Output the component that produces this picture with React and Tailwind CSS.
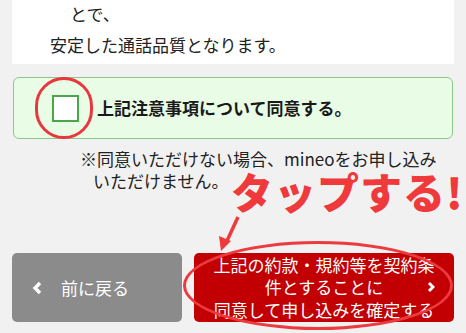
export default function App() {
  return (
    <div
      className="relative w-[466px] h-[333px] overflow-hidden bg-[#f1f1f1] px-[12px] text-[#222]"
      style={{ fontFamily: '"Noto Sans CJK JP", "Noto Sans", sans-serif' }}
    >
      {/* notice card (tail end) */}
      <div className="h-[64px] bg-white pl-[38px] pt-[3px] text-[17px] leading-[22px]">
        <p className="pl-[20px]">とで、</p>
        <p className="mt-[9px]">安定した通話品質となります。</p>
      </div>

      {/* agree box */}
      <div className="relative mx-[1px] mt-[13px] flex h-[62px] items-center gap-[18px] rounded-[6px] border border-[#8cc88c] bg-[#e9fce6] pl-[38px]">
        <div className="h-[27px] w-[27px] border-2 border-[#4aa64a] bg-white" />
        <span className="text-[17px] font-bold text-[#1a1a1a]">上記注意事項について同意する。</span>
        {/* red annotation circle */}
        <div className="absolute left-[21px] top-[-1px] h-[62px] w-[58px] rounded-full border-[3px] border-[#e8383d]" />
      </div>

      {/* note */}
      <div className="mt-[9px] pl-[68px] text-[17px] leading-[22px]">
        <p>※同意いただけない場合、mineoをお申し込み</p>
        <p className="pl-[13px]">いただけません。</p>
      </div>

      {/* buttons */}
      <div className="mt-[61px] flex gap-[12px]">
        <button className="flex h-[69px] w-[170px] items-center rounded-[5px] bg-[#8b8b8b] pl-[20px] text-[17px] text-white">
          <svg width="10" height="14" viewBox="0 0 10 14" className="mr-[19px]">
            <polyline points="8,2 3,7 8,12" fill="none" stroke="white" strokeWidth="3.4" />
          </svg>
          前に戻る
        </button>
        <button className="relative flex h-[69px] flex-1 flex-col items-center justify-center rounded-[5px] bg-[#c20003] text-[17px] leading-[22.5px] text-white">
          <span>上記の約款・規約等を契約条</span>
          <span>件とすることに</span>
          <span>同意して申し込みを確定する</span>
          <svg width="8" height="12" viewBox="0 0 8 12" className="absolute right-[19px] top-[28px]">
            <polyline points="2,2 6,6 2,10" fill="none" stroke="white" strokeWidth="3" />
          </svg>
        </button>
      </div>

      {/* annotations */}
      <div className="absolute left-[231px] top-[170px] whitespace-nowrap text-[42px] font-black leading-none tracking-[1px] text-[#f0393b]">
        タップする!
      </div>
      <svg className="absolute left-0 top-0" width="466" height="333">
        <line x1="238" y1="217" x2="226" y2="243" stroke="#f0393b" strokeWidth="3.5" />
        <polygon points="221,251 219,236 231,241" fill="#f0393b" />
      </svg>
      <div className="absolute left-[183px] top-[241px] h-[89px] w-[270px] rounded-[50%] border-[3px] border-[#ec3a3f]" />
    </div>
  );
}
